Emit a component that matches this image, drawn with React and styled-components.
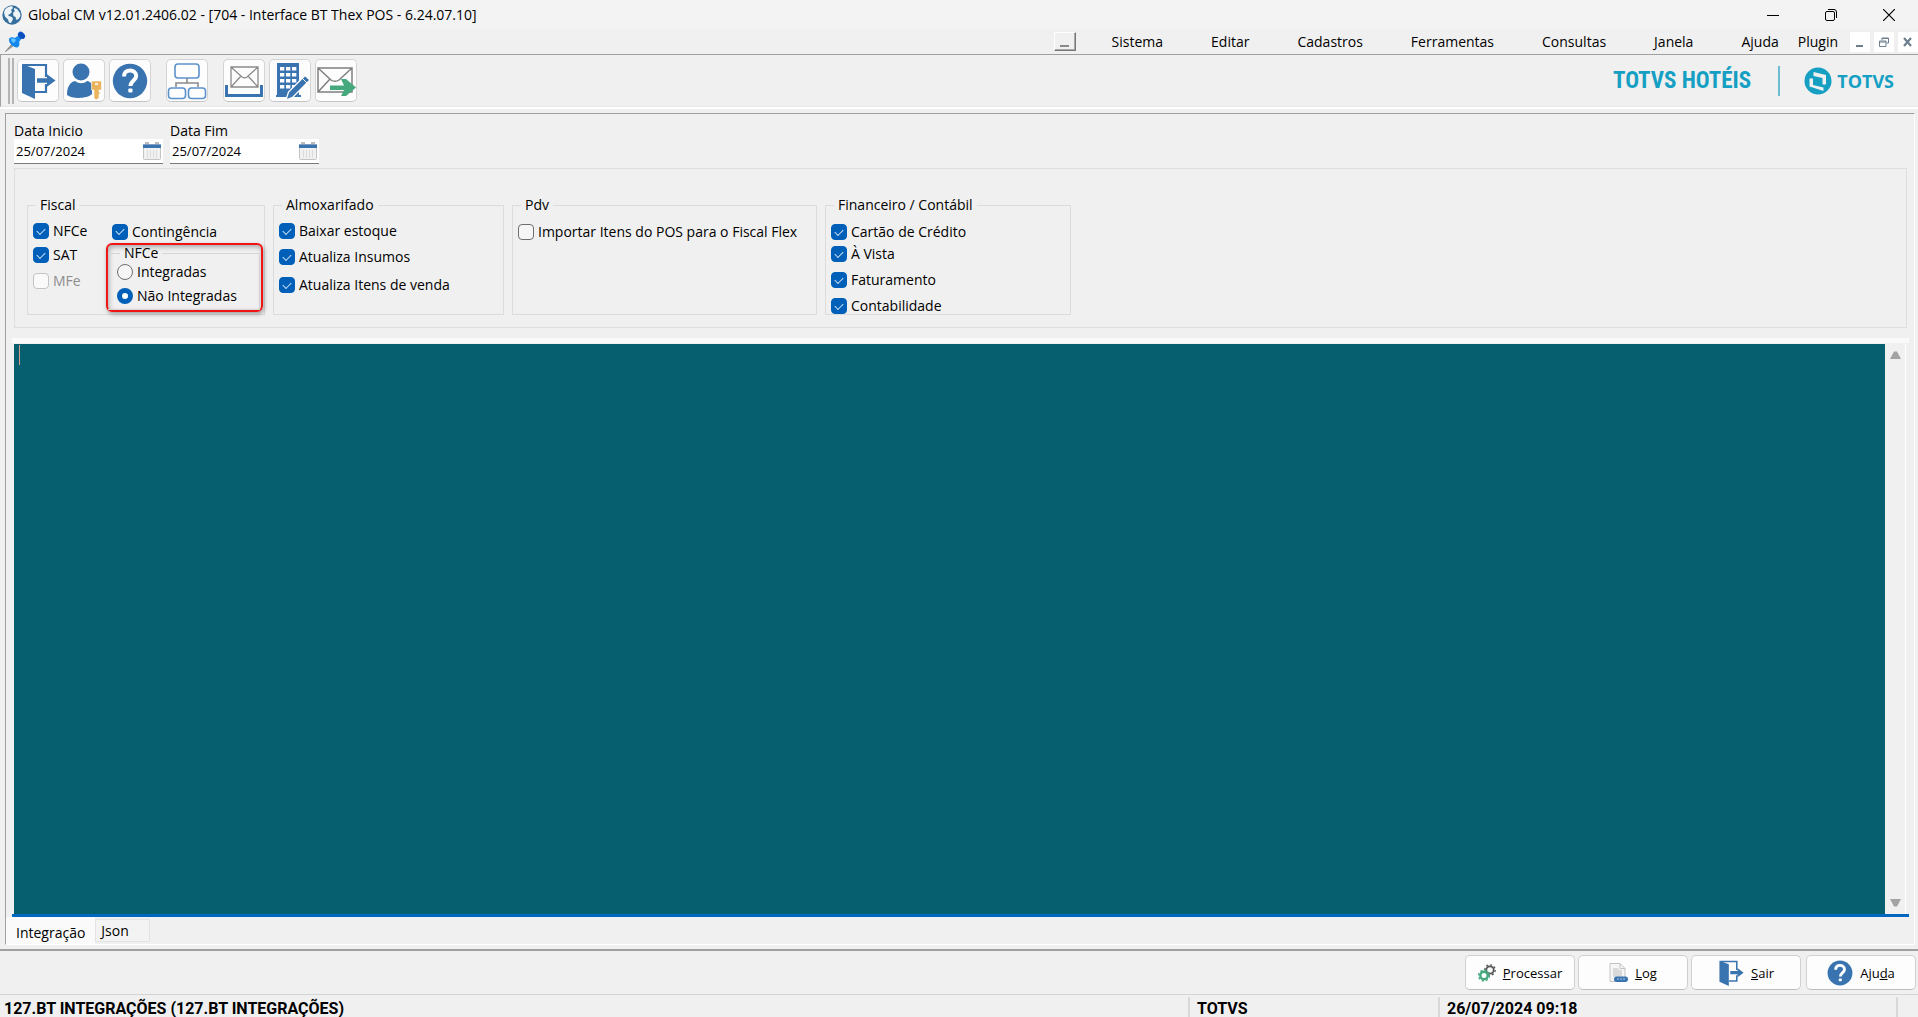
import React, { useId, useState } from "react";
import styled, { createGlobalStyle, css } from "styled-components";

const BLUE = "#3a74b0";
const ACCENT = "#005fb8";
const FACE = "#f0f0f0";

const GlobalStyle = createGlobalStyle`
  * { box-sizing: border-box; }
  body {
    margin: 0;
    background: ${FACE};
    color: #000;
    font-family: "Open Sans", "Noto Sans", sans-serif;
    font-size: 14px;
    line-height: 16px;
  }
  button, input, textarea { font: inherit; color: inherit; margin: 0; }
  button { padding: 0; cursor: default; }
  svg { display: block; flex: none; }
`;

const Window = styled.div`
  display: flex;
  flex-direction: column;
  height: 100vh;
  min-height: 600px;
  overflow: hidden;
`;

const TitleBar = styled.header`
  display: flex;
  align-items: center;
  gap: 6px;
  height: 29px;
  padding-left: 2px;
  background: #f3f3f3;
`;

const Title = styled.h1`
  flex: 1;
  margin: 0;
  font-size: 14px;
  font-weight: 400;
  line-height: 20px;
`;

const CaptionButtons = styled.div`
  display: flex;
`;

const CaptionButton = styled.button`
  display: grid;
  place-items: center;
  width: 58px;
  height: 29px;
  border: 0;
  background: none;
`;

const Flat = styled.button`
  display: grid;
  place-items: center;
  border: 0;
  background: none;
`;

const MenuBar = styled.nav`
  display: flex;
  align-items: center;
  height: 26px;
  padding-left: 4px;
  border-bottom: 1px solid #a0a0a0;
`;

const Spacer = styled.div`
  flex: 1;
`;

const RaisedButton = styled.button`
  display: flex;
  align-items: flex-end;
  justify-content: center;
  width: 22px;
  height: 19px;
  margin-right: 12px;
  padding-bottom: 3px;
  border: 1px solid;
  border-color: #fff #777 #777 #fff;
  box-shadow: inset -1px -1px 0 #a8a8a8;
  background: ${FACE};
`;

const MenuItem = styled.button`
  padding: 0 ${(p) => (p.$tight ? "12px 0 19px" : "24px")};
  border: 0;
  background: none;
  line-height: 20px;
  ${(p) => p.$last && css`padding-right: 0;`}
`;

const MdiButtons = styled.div`
  display: flex;
  gap: 4px;
`;

const MdiButton = styled.button`
  display: grid;
  place-items: center;
  width: 20px;
  height: 20px;
  border: 0;
  background: #fff;
`;

const ToolBar = styled.div`
  display: flex;
  align-items: center;
  height: 52px;
  padding: 0 24px 0 7px;
  border-left: 1px solid #a0a0a0;
  border-bottom: 1px solid #e6e6e6;
`;

const Grip = styled.span`
  width: 6px;
  height: 46px;
  margin-right: 3px;
  border: solid #b4b4b4;
  border-width: 0 2px;
`;

const ToolGroup = styled.div`
  display: flex;
  gap: 4px;
  margin-right: 15px;
`;

const ToolButton = styled.button`
  display: grid;
  place-items: center;
  width: 42px;
  height: 43px;
  border: 1px solid #d4d4d4;
  border-bottom-color: #c4c4c4;
  border-radius: 5px;
  background: #fdfdfd;
`;

const Brand = styled.div`
  display: flex;
  align-items: center;
  color: #149fc3;
  font-weight: 700;
`;

const Product = styled.span`
  font-family: "Liberation Sans Narrow", "Roboto Condensed", Roboto, sans-serif;
  font-size: 23px;
  line-height: 24px;
`;

const BrandDivider = styled.span`
  width: 2px;
  height: 30px;
  margin: 0 24px 0 27px;
  background: #6cbdd3;
`;

const Company = styled.span`
  margin-left: 5px;
  font-size: 18px;
  line-height: 24px;
`;

const Workspace = styled.main`
  display: flex;
  flex: 1;
  flex-direction: column;
  min-height: 0;
  padding: 4px 3px 4px 5px;
  border-top: 2px solid #fff;
`;

const Form = styled.form`
  display: flex;
  flex: 1;
  flex-direction: column;
  min-height: 0;
  border: 1px solid;
  border-color: #a0a0a0 #fff #fff #a0a0a0;
`;

const Dates = styled.div`
  display: flex;
  gap: 7px;
  padding: 8px 8px 4px;
`;

const DateGroup = styled.div`
  width: 149px;
`;

const DateLabel = styled.label`
  display: block;
  line-height: 17px;
`;

const DateBox = styled.span`
  display: flex;
  align-items: center;
  height: 25px;
  padding: 0 2px;
  border-bottom: 1px solid #7a7a7a;
  background: #fff;
`;

const DateInput = styled.input`
  flex: 1;
  min-width: 0;
  padding: 0;
  border: 0;
  outline: 0;
  background: none;
  font-size: 13px;
`;

const Options = styled.section`
  display: flex;
  align-items: stretch;
  gap: 8px;
  height: 160px;
  margin: 0 7px 0 8px;
  padding: 28px 12px 12px;
  border: 1px solid #dedede;
`;

const Group = styled.fieldset`
  display: flex;
  width: ${(p) => p.$width}px;
  min-width: 0;
  margin: 0;
  padding: 7px 5px 0;
  border: 1px solid #dcdcdc;
`;

const Legend = styled.legend`
  margin-left: 3px;
  padding: 0 4px;
  line-height: 16px;
`;

const Stack = styled.div`
  display: grid;
  flex: none;
  grid-template-rows: ${(p) => p.$rows};
  align-content: start;
  width: ${(p) => p.$width || "auto"};
`;

const Choice = styled.label`
  display: flex;
  align-items: center;
  gap: 4px;
  white-space: nowrap;
  color: ${(p) => (p.$disabled ? "#8d8d8d" : "#000")};
`;

const CheckInput = styled.input`
  appearance: none;
  display: grid;
  place-items: center;
  flex: none;
  width: 16px;
  height: 16px;
  border: 1px solid #6e6e6e;
  border-radius: 4px;
  background: #f6f6f6;

  &:disabled { border-color: #c3c3c3; background: #fafafa; }
  &:checked { border-color: ${ACCENT}; background: ${ACCENT}; }
  &:checked::after {
    content: "";
    width: 7px;
    height: 4px;
    margin-bottom: 2px;
    border: solid #c9dff2;
    border-width: 0 0 1px 1px;
    transform: rotate(-45deg);
  }
`;

const RadioInput = styled.input`
  appearance: none;
  flex: none;
  width: 16px;
  height: 16px;
  border: 1px solid #6e6e6e;
  border-radius: 50%;
  background: #f6f6f6;

  &:checked { border: 5px solid ${ACCENT}; background: #fff; }
`;

const Highlight = styled.div`
  width: 157px;
  height: 69px;
  margin-left: -6px;
  border: 2px solid #f01414;
  border-radius: 6px;
  box-shadow: 1px 2px 4px rgba(0, 0, 0, 0.35), inset 1px 2px 5px rgba(0, 0, 0, 0.3);
`;

const SubGroup = styled.fieldset`
  min-width: 0;
  margin: 0 1px 0 0;
  padding: 0 0 0 9px;
  border: 1px solid #d6d6d6;
  border-left: 0;
`;

const Pages = styled.section`
  display: flex;
  flex: 1;
  flex-direction: column;
  min-height: 0;
  margin: 10px 5px 0 0;
`;

const Page = styled.div`
  display: flex;
  flex: 1;
  min-height: 0;
  margin-left: 6px;
  padding: 6px 3px 0 2px;
  border-bottom: 3px solid #0067c0;
  background: linear-gradient(#fafafa 5px, ${FACE} 5px);
`;

const Console = styled.div`
  position: relative;
  display: flex;
  flex: 1;
`;

const ConsoleText = styled.textarea`
  flex: 1;
  padding: 2px 5px;
  border: 0;
  outline: 0;
  resize: none;
  background: #065f6e;
  color: #fff;
`;

const Caret = styled.span`
  position: absolute;
  top: 1px;
  left: 5px;
  width: 1px;
  height: 20px;
  background: #d99b8a;
`;

const ScrollTrack = styled.div`
  display: flex;
  flex-direction: column;
  justify-content: space-between;
  width: 21px;
  padding: 4px 0;
  border-right: 1px solid #fff;
`;

const ScrollArrow = styled(Flat)`
  height: 14px;
`;

const Tabs = styled.div`
  display: flex;
  align-items: flex-start;
  height: 27px;
`;

const Tab = styled.button`
  min-width: ${(p) => (p.$active ? 88 : 55)}px;
  height: ${(p) => (p.$active ? 27 : 23)}px;
  margin-top: ${(p) => (p.$active ? 0 : 2)}px;
  padding: ${(p) => (p.$active ? "4px 10px 0" : "0 5px")};
  border: ${(p) => (p.$active ? "0" : "1px solid #e3e3e3")};
  background: ${(p) => (p.$active ? "#fafafa" : "#f3f3f3")};
  text-align: left;
`;

const Actions = styled.footer`
  display: flex;
  justify-content: flex-end;
  gap: 3px;
  height: 46px;
  padding: 4px 2px 6px;
  border-top: 2px solid #a0a0a0;
  border-bottom: 1px solid #d4d4d4;
`;

const ActionButton = styled.button`
  display: flex;
  align-items: center;
  justify-content: center;
  gap: 7px;
  width: 110px;
  height: 35px;
  border: 1px solid #d0d0d0;
  border-bottom-color: #bcbcbc;
  border-radius: 5px;
  background: #fdfdfd;
  font-size: 13px;

  &:last-child { margin-left: 2px; }
`;

const StatusBar = styled.footer`
  display: grid;
  grid-template-columns: 1188fr 250fr 458fr 22fr;
  height: 22px;
  padding-top: 2px;
  font-family: Roboto, "Liberation Sans", sans-serif;
  font-size: 16px;
  font-weight: 700;
  line-height: 24px;
`;

const StatusCell = styled.span`
  padding-left: ${(p) => (p.$first ? 4 : 7)}px;
  border-left: ${(p) => (p.$first ? "0" : "2px solid #d9d9d9")};
  white-space: nowrap;
  overflow: hidden;
`;

const GlobeIcon = () => (
  <svg width="20" height="20" viewBox="0 0 20 20">
    <circle cx="10" cy="10" r="9.7" fill="#376f9f" />
    <path d="M3 4.500 6 2l4-1 1 2-2 2 1 2-2 2-2 1 1 1 3 1 1 2-2 4-2-.5-1-3-3-3-1-4zM12 3l3 1 3 4 .5 3-2 3-2 1-1-3-2-1-.5-3 2-2-1-1z" fill="#edf3f7" />
  </svg>
);

const PinIcon = () => (
  <svg width="22" height="22" viewBox="0 0 22 22">
    <path d="M1.500 20.500 8 13l1.500 1.500z" fill="#9c9c9c" stroke="#8a8a8a" />
    <path d="M5 8c1-2 4-2 6-1l4-3 3 3-3 4c1 2 .5 4-1.500 5.500C10 17 4 12 5 8z" fill="#1488ee" />
    <path d="M7 8c2-1 4 0 5 1l-2 3c-2-1-3-2-3-4z" fill="#66c6ff" />
    <ellipse cx="17.500" cy="4.300" rx="3" ry="4" transform="rotate(-45 17.500 4.300)" fill="#0a50c0" />
  </svg>
);

const DoorIcon = ({ size = 36 }) => (
  <svg width={size} height={size} viewBox="0 0 36 36">
    <path d="M2 1 15 6v30L2 30z" fill={BLUE} />
    <path d="M3 2h23v12M26 21v8H15" fill="none" stroke={BLUE} strokeWidth="2.200" />
    <path d="M17 15.200h10v-4l8.500 6.300-8.500 6.300v-4H17z" fill={BLUE} />
  </svg>
);

const UserKeyIcon = () => (
  <svg width="38" height="38" viewBox="0 0 38 38">
    <circle cx="16" cy="10" r="8.500" fill={BLUE} />
    <path d="M2 33c0-8 3-13 8-14 4 3 9 3 12 0 2 0 4 2 5 3v10c-5 5-20 5-25 1z" fill={BLUE} />
    <path d="M26.500 19h10v9h-2.500v2h1v2h-1v4l-3 2-2-2V28h-2.500z" fill="#eab35c" stroke="#fdfdfd" strokeWidth=".6" />
    <path d="M30 22h3" stroke="#fff" strokeWidth="1.500" />
  </svg>
);

const HelpIcon = ({ size = 36 }) => (
  <svg width={size} height={size} viewBox="0 0 36 36">
    <circle cx="18" cy="18" r="17.200" fill={BLUE} />
    <path d="M12 13.500c0-4 2.500-6 6-6s6.200 2.200 6.200 5.500c0 4.500-5.700 4.500-5.700 10" fill="none" stroke="#fff" strokeWidth="4" />
    <rect x="16.300" y="25.500" width="4.200" height="4" rx="1" fill="#fff" />
  </svg>
);

const TreeIcon = () => (
  <svg width="40" height="38" viewBox="0 0 40 38" fill="none" stroke="#5b92cc" strokeWidth="1.600">
    <rect x="8" y="2" width="24" height="14" rx="3" fill="#fff" />
    <path d="M20 16v5M9 25v-4h22v4" stroke="#8b8b8b" />
    <rect x="1.500" y="26" width="17" height="10.500" rx="3" fill="#fff" />
    <rect x="21.500" y="26" width="17" height="10.500" rx="3" fill="#fff" />
  </svg>
);

const InboxIcon = () => (
  <svg width="38" height="36" viewBox="0 0 38 36" fill="none">
    <path d="M1.500 22v10.500h35V22" stroke={BLUE} strokeWidth="3" />
    <g stroke="#8b8b8b" strokeWidth="1.300">
      <path d="M6 4h27v20H6zM6 4l11 10c2 1.500 3 1.500 5 0L33 4M6 24l10-11M33 24 23 13" />
    </g>
  </svg>
);

const BuildingIcon = () => (
  <svg width="38" height="38" viewBox="0 0 38 38">
    <path d="M6 1h22v32h2v2H5v-2h1z" fill={BLUE} />
    <g fill="#fff">
      {[5, 11, 17, 23].map((y) =>
        [9, 15, 21].map((x) => <rect key={`${x}-${y}`} x={x} y={y} width="4.300" height="3.500" />)
      )}
    </g>
    <path d="m15 38 2.500-8L34 13.500l5 4.500-17 17z" fill={BLUE} stroke="#fdfdfd" strokeWidth="1.300" />
    <path d="m31 16 5 5" stroke="#fff" />
  </svg>
);

const SendIcon = () => (
  <svg width="40" height="36" viewBox="0 0 40 36">
    <path d="M2 5h34v24H2zM2 5l13 12c3 2 5 2 8 0L36 5M2 29l12-13" fill="none" stroke="#7f7f7f" strokeWidth="1.500" />
    <path d="M14 22.500h14L25 16h5l10 8.500-10 8.500h-5l3-6H14z" fill="#45a97d" />
  </svg>
);

const CalendarIcon = () => (
  <svg width="18" height="18" viewBox="0 0 18 18">
    <rect x=".5" y="2.500" width="17" height="15" rx="1" fill="#f1f1f1" stroke="#c4c4c4" />
    <path d="M0 2.500h18V6H0z" fill={BLUE} />
    <path d="M2 1h4M12 1h4" stroke="#bcbcbc" strokeWidth="2" />
    <path d="M4.500 8v8M7.500 8v8M10.500 8v8M13.500 8v8" stroke="#dcdcdc" />
  </svg>
);

const TotvsMark = () => (
  <svg width="28" height="28" viewBox="0 0 28 28">
    <circle cx="14" cy="14" r="13.500" fill="#149fc3" />
    <path d="M9.500 5 22 8v9.500h-3.500V11L9.500 9z" fill="#f0f0f0" />
    <path d="M5.500 11.500H9V18l10.500 2.500V24L5.500 19.500z" fill="#f0f0f0" />
  </svg>
);

const GearsIcon = () => (
  <svg width="18" height="18" viewBox="0 0 18 18" fill="none">
    <circle cx="12" cy="6" r="3.700" stroke="#555" strokeWidth="1.800" />
    <circle cx="12" cy="6" r="5.200" stroke="#555" strokeWidth="1.300" strokeDasharray="2 2" />
    <circle cx="6" cy="11.500" r="3.700" fill="#fdfdfd" stroke="#45a97d" strokeWidth="2.400" />
    <circle cx="6" cy="11.500" r="5.400" stroke="#45a97d" strokeWidth="1.400" strokeDasharray="2.200 2" />
  </svg>
);

const LogIcon = () => (
  <svg width="19" height="20" viewBox="0 0 19 20">
    <path d="M1 .5h10l5 5v13H1z" fill="#f6f6f6" stroke="#c3c3c3" />
    <path d="M4 5h5l1 2h3v7H4z" fill="#dadada" />
    <path d="M11 .5v5h5" fill="none" stroke="#c3c3c3" />
    <rect x="5" y="13.500" width="14" height="5.500" rx="2.700" fill={BLUE} />
    <path d="M8 16h2M11 16h2M14 16h2" stroke="#a9c6e2" />
  </svg>
);

const ArrowIcon = ({ down }) => (
  <svg width="11" height="8" viewBox="0 0 11 8">
    <path d={down ? "M0 0h11L7 7.500H4z" : "M4 .5h3L11 8H0z"} fill="#a3a3a3" />
  </svg>
);

const TOOLS = [
  [["Sair do sistema", DoorIcon], ["Trocar usuário", UserKeyIcon], ["Ajuda", HelpIcon]],
  [["Estrutura", TreeIcon]],
  [["Caixa de entrada", InboxIcon], ["Empresa", BuildingIcon], ["Enviar mensagem", SendIcon]],
];

const MENUS = ["Sistema", "Editar", "Cadastros", "Ferramentas", "Consultas", "Janela"];

function Check({ children, disabled, checked }) {
  const id = useId();
  return (
    <Choice htmlFor={id} $disabled={disabled}>
      <CheckInput id={id} type="checkbox" defaultChecked={checked} disabled={disabled} />
      {children}
    </Choice>
  );
}

function Radio({ children, checked }) {
  const id = useId();
  return (
    <Choice htmlFor={id}>
      <RadioInput id={id} type="radio" name="nfce" defaultChecked={checked} />
      {children}
    </Choice>
  );
}

function DateField({ label }) {
  const id = useId();
  return (
    <DateGroup>
      <DateLabel htmlFor={id}>{label}</DateLabel>
      <DateBox>
        <DateInput id={id} type="text" defaultValue="25/07/2024" />
        <Flat type="button" aria-label={`Calendário ${label}`}><CalendarIcon /></Flat>
      </DateBox>
    </DateGroup>
  );
}

export default function App() {
  const [tab, setTab] = useState("Integração");
  return (
    <Window>
      <GlobalStyle />
      <TitleBar>
        <GlobeIcon />
        <Title>Global CM v12.01.2406.02 - [704 - Interface BT Thex POS - 6.24.07.10]</Title>
        <CaptionButtons>
          <CaptionButton aria-label="Minimizar">
            <svg width="12" height="12" viewBox="0 0 12 12"><path d="M0 6.500h12" stroke="#000" /></svg>
          </CaptionButton>
          <CaptionButton aria-label="Restaurar">
            <svg width="12" height="12" viewBox="0 0 12 12" fill="none" stroke="#000">
              <rect x=".5" y="2.500" width="9" height="9" rx="1.500" />
              <path d="M3 .5h6a2.500 2.500 0 0 1 2.500 2.500v6" />
            </svg>
          </CaptionButton>
          <CaptionButton aria-label="Fechar">
            <svg width="12" height="12" viewBox="0 0 12 12"><path d="m0 0 12 12M12 0 0 12" stroke="#000" strokeWidth="1.200" /></svg>
          </CaptionButton>
        </CaptionButtons>
      </TitleBar>

      <MenuBar>
        <PinIcon />
        <Spacer />
        <RaisedButton aria-label="Recolher menu">
          <svg width="9" height="2" viewBox="0 0 9 2"><path d="M0 1h9" stroke="#8a8a8a" strokeWidth="2" /></svg>
        </RaisedButton>
        {MENUS.map((m) => <MenuItem key={m}>{m}</MenuItem>)}
        <MenuItem $last>Ajuda</MenuItem>
        <MenuItem $tight>Plugin</MenuItem>
        <MdiButtons>
          <MdiButton aria-label="Minimizar janela">
            <svg width="10" height="10" viewBox="0 0 10 10"><path d="M1 9h7" stroke="#6d7e8f" strokeWidth="2" /></svg>
          </MdiButton>
          <MdiButton aria-label="Restaurar janela">
            <svg width="10" height="10" viewBox="0 0 10 10" fill="none" stroke="#6d7e8f">
              <path d="M3 3V1h6.500v5H7.500M3 1.500h6.500M.5 4h6.500v5.500H.5zM.5 5h6.500" />
            </svg>
          </MdiButton>
          <MdiButton aria-label="Fechar janela">
            <svg width="10" height="10" viewBox="0 0 10 10"><path d="m1 1 7 8M8 1 1 9" stroke="#6d7e8f" strokeWidth="2.200" /></svg>
          </MdiButton>
        </MdiButtons>
      </MenuBar>

      <ToolBar>
        <Grip />
        {TOOLS.map((group, i) => (
          <ToolGroup key={i}>
            {group.map(([name, Icon]) => (
              <ToolButton key={name} aria-label={name}><Icon /></ToolButton>
            ))}
          </ToolGroup>
        ))}
        <Spacer />
        <Brand>
          <Product>TOTVS HOTÉIS</Product>
          <BrandDivider />
          <TotvsMark />
          <Company>TOTVS</Company>
        </Brand>
      </ToolBar>

      <Workspace>
        <Form onSubmit={(e) => e.preventDefault()}>
          <Dates>
            <DateField label="Data Inicio" />
            <DateField label="Data Fim" />
          </Dates>

          <Options>
            <Group $width={238}>
              <Legend>Fiscal</Legend>
              <Stack $rows="22px 26px 26px" $width="79px">
                <Check checked>NFCe</Check>
                <Check checked>SAT</Check>
                <Check disabled>MFe</Check>
              </Stack>
              <Stack $rows="23px 69px">
                <Check checked>Contingência</Check>
                <Highlight>
                  <SubGroup>
                    <Legend>NFCe</Legend>
                    <Stack $rows="22px 26px">
                      <Radio>Integradas</Radio>
                      <Radio checked>Não Integradas</Radio>
                    </Stack>
                  </SubGroup>
                </Highlight>
              </Stack>
            </Group>
            <Group $width={231}>
              <Legend>Almoxarifado</Legend>
              <Stack $rows="22px 30px 26px">
                <Check checked>Baixar estoque</Check>
                <Check checked>Atualiza Insumos</Check>
                <Check checked>Atualiza Itens de venda</Check>
              </Stack>
            </Group>
            <Group $width={305}>
              <Legend>Pdv</Legend>
              <Stack $rows="24px">
                <Check>Importar Itens do POS para o Fiscal Flex</Check>
              </Stack>
            </Group>
            <Group $width={246}>
              <Legend>Financeiro / Contábil</Legend>
              <Stack $rows="24px 20px 32px 20px">
                <Check checked>Cartão de Crédito</Check>
                <Check checked>À Vista</Check>
                <Check checked>Faturamento</Check>
                <Check checked>Contabilidade</Check>
              </Stack>
            </Group>
          </Options>

          <Pages>
            <Page>
              <Console>
                <ConsoleText aria-label={tab} spellCheck={false} />
                <Caret />
              </Console>
              <ScrollTrack>
                <ScrollArrow type="button" aria-label="Rolar para cima"><ArrowIcon /></ScrollArrow>
                <ScrollArrow type="button" aria-label="Rolar para baixo"><ArrowIcon down /></ScrollArrow>
              </ScrollTrack>
            </Page>
            <Tabs role="tablist">
              {["Integração", "Json"].map((name) => (
                <Tab key={name} type="button" role="tab" aria-selected={tab === name} $active={tab === name} onClick={() => setTab(name)}>
                  {name}
                </Tab>
              ))}
            </Tabs>
          </Pages>
        </Form>
      </Workspace>

      <Actions>
        <ActionButton><GearsIcon /><span><u>P</u>rocessar</span></ActionButton>
        <ActionButton><LogIcon /><span><u>L</u>og</span></ActionButton>
        <ActionButton><DoorIcon size={26} /><span><u>S</u>air</span></ActionButton>
        <ActionButton><HelpIcon size={26} /><span>Aju<u>d</u>a</span></ActionButton>
      </Actions>

      <StatusBar>
        <StatusCell $first>127.BT INTEGRAÇÕES (127.BT INTEGRAÇÕES)</StatusCell>
        <StatusCell>TOTVS</StatusCell>
        <StatusCell>26/07/2024 09:18</StatusCell>
        <StatusCell />
      </StatusBar>
    </Window>
  );
}
